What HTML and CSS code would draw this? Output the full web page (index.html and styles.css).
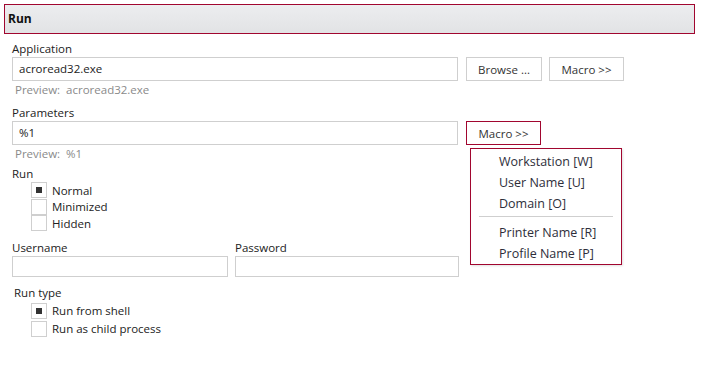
FILE: index.html
```html
<!DOCTYPE html>
<html lang="en">
<head>
  <meta charset="UTF-8" />
  <title>Run</title>
  <link rel="stylesheet" href="styles.css">
</head>
<body>
  <div class="header">Run</div>
  <div class="form">
    <div class="label first">Application</div>
    <div class="row">
      <div class="input wide">acroread32.exe</div>
      <button class="btn browse">Browse ...</button>
      <button class="btn macro">Macro &gt;&gt;</button>
    </div>
    <div class="preview">Preview:&nbsp; acroread32.exe</div>

    <div class="label">Parameters</div>
    <div class="row">
      <div class="input wide">%1</div>
      <div class="menu-anchor">
        <button class="btn macro active">Macro &gt;&gt;</button>
        <div class="menu">
          <div class="menu-item">Workstation [W]</div>
          <div class="menu-item">User Name [U]</div>
          <div class="menu-item">Domain [O]</div>
          <div class="menu-sep"></div>
          <div class="menu-item">Printer Name [R]</div>
          <div class="menu-item">Profile Name [P]</div>
        </div>
      </div>
    </div>
    <div class="preview">Preview:&nbsp; %1</div>

    <div class="label run">Run</div>
    <div class="options">
      <div class="option"><span class="box checked"></span>Normal</div>
      <div class="option"><span class="box"></span>Minimized</div>
      <div class="option"><span class="box"></span>Hidden</div>
    </div>

    <div class="creds">
      <div class="cred user">
        <div class="label">Username</div>
        <div class="input short"></div>
      </div>
      <div class="cred pass">
        <div class="label">Password</div>
        <div class="input short"></div>
      </div>
    </div>

    <div class="label runtype">Run type</div>
    <div class="options runtype-opts">
      <div class="option"><span class="box checked"></span>Run from shell</div>
      <div class="option"><span class="box"></span>Run as child process</div>
    </div>
  </div>
</body>
</html>
```
FILE: styles.css
```css
html, body {
  margin: 0; padding: 0; background: #fff;
  font-family: 'Open Sans', 'Noto Sans', sans-serif; font-size: 11.5px; color: #222;
}
.header {
  margin: 4px 6px 0 4px; height: 28px; line-height: 27px;
  border: 1px solid #a1062f; padding-left: 3px;
  background: linear-gradient(#ecedef, #e2e3e5);
  font-weight: bold; font-size: 12px; color: #111;
}
.form { padding: 0 12px; }
.label { line-height: 14px; height: 14px; margin-top: 9px; }
.label.first { margin-top: 8px; }
.row { display: flex; gap: 8px; margin-top: 1px; height: 24px; }
.input {
  box-sizing: border-box; border: 1px solid #cfcfcf; background: #fff;
  padding-left: 6px; line-height: 22px; color: #222;
}
.input.wide { width: 446px; height: 24px; }
.input.short { height: 21px; margin-top: 1px; }
.btn {
  box-sizing: border-box; height: 24px; margin: 0; padding: 0;
  border: 1px solid #cfcfcf; background: #fff; color: #333;
  font-family: inherit; font-size: 11.5px; cursor: pointer;
}
.btn.browse { width: 76px; }
.btn.macro { width: 75px; margin-left: -1px; }
.btn.active { border-color: #a1062f; margin-left: 0; }
.menu-anchor { position: relative; }
.menu {
  position: absolute; top: 27px; left: 4px; z-index: 5;
  width: 152px; box-sizing: border-box; padding: 2px 0 0;
  border: 1px solid #a1062f; background: #fff;
  box-shadow: 1px 1px 2px rgba(0,0,0,0.12);
}
.menu-item {
  padding-left: 28px; line-height: 21px; height: 21px;
  font-size: 12.5px; color: #2e2e3a;
}
.menu-sep { margin: 2px 8px 5px 8px; border-top: 1px solid #cfcfcf; }
.preview { color: #8a8a8a; padding-left: 3px; line-height: 14px; margin-top: 2px; }
.label.run { margin-top: 6px; }
.options { margin: 1px 0 0 19px; }
.option { display: flex; align-items: center; height: 16.5px; gap: 5px; }
.runtype-opts { margin-top: 2px; }
.runtype-opts .option { height: 18px; }
.box {
  box-sizing: border-box; width: 16px; height: 16px;
  border: 1px solid #cfcfcf; display: flex; align-items: center; justify-content: center;
}
.box.checked::after { content: ''; width: 6px; height: 6px; background: #333; }
.creds { display: flex; gap: 7px; }
.cred.user .input { width: 216px; }
.cred.pass .input { width: 224px; }
.creds .label { margin-top: 9px; }
.label.runtype { margin-top: 9px; padding-left: 2px; }
```
